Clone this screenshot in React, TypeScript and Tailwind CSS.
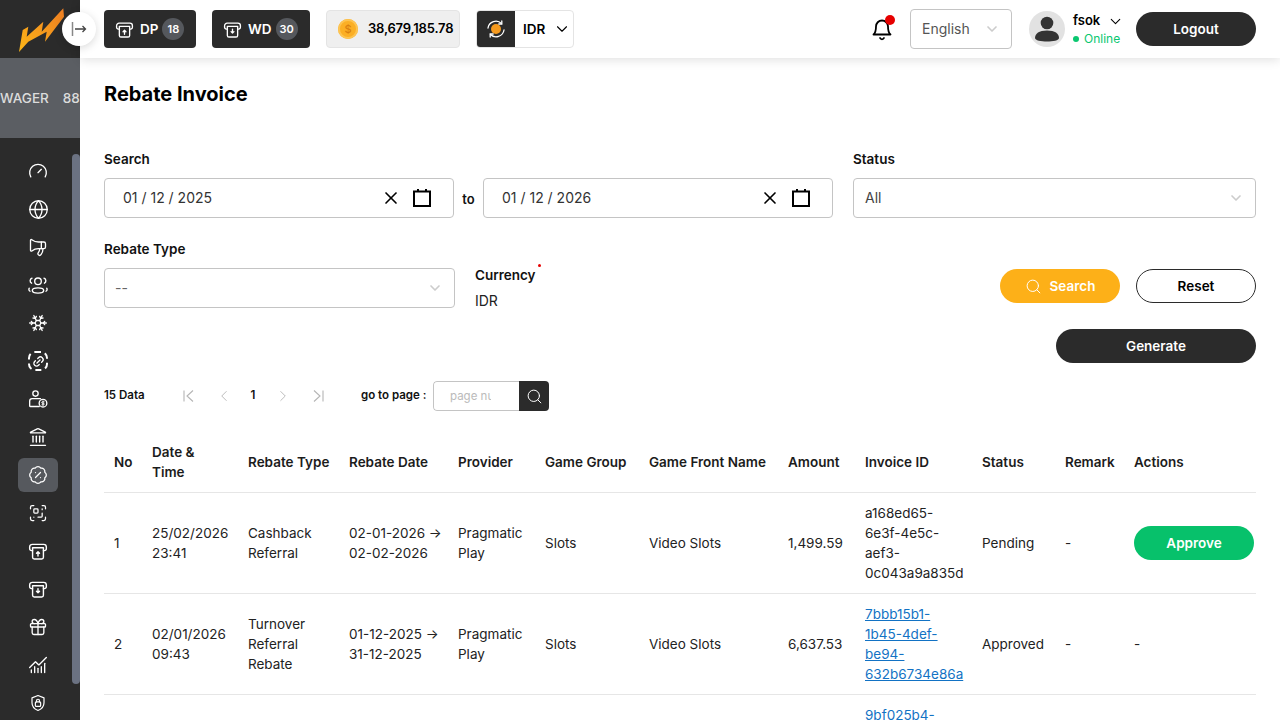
import React from "react";
import { ChevronDown, ChevronLeft, ChevronRight, ChevronsLeft, Search, X, Gauge, Globe, Megaphone, BadgePercent, Gift, Landmark, ScanQrCode, ChartNoAxesCombined, Snowflake, Link2 } from "lucide-react";

function Atm({ down = false, size = 20 }: { down?: boolean; size?: number }) {
  return (
    <svg width={size} height={size} viewBox="0 0 24 24" fill="none" stroke="currentColor" strokeWidth="1.7" strokeLinecap="round" strokeLinejoin="round">
      <path d="M5.5 11.5H4.2A2.2 2.2 0 0 1 2 9.3V7.2A3.2 3.2 0 0 1 5.2 4h13.6A3.2 3.2 0 0 1 22 7.2v2.1a2.2 2.2 0 0 1-2.2 2.2h-1.3" />
      <path d="M5.5 8h13v11.5a2 2 0 0 1-2 2h-9a2 2 0 0 1-2-2Z" />
      {down ? <path d="M12 11.5v5m-1.8-1.8L12 16.5l1.8-1.8" /> : <path d="M12 18v-5m-1.8 1.8L12 13l1.8 1.8" />}
    </svg>
  );
}

function UsersRing() {
  return (
    <svg width="22" height="22" viewBox="0 0 24 24" fill="none" stroke="currentColor" strokeWidth="1.5" strokeLinecap="round">
      <circle cx="12" cy="8" r="3.6" />
      <ellipse cx="12" cy="18" rx="6.2" ry="2.8" />
      <path d="M5.5 4.5A3 3 0 0 0 5 10M18.5 4.5A3 3 0 0 1 19 10M2.5 15.5c-.8 1.2-.5 2.5.8 3.3M21.5 15.5c.8 1.2.5 2.5-.8 3.3" />
    </svg>
  );
}

function UserDollar() {
  return (
    <svg width="20" height="20" viewBox="0 0 24 24" fill="none" stroke="currentColor" strokeWidth="1.6" strokeLinecap="round">
      <circle cx="9" cy="5.5" r="3.2" />
      <path d="M15 11.5H5a3 3 0 0 0-3 3V20a1 1 0 0 0 1 1h10.5" />
      <circle cx="18" cy="17" r="4.6" />
      <path d="M19.3 15.4h-1.9a.9.9 0 0 0 0 1.8h1.2a.9.9 0 0 1 0 1.8h-1.9M18 14.4v5.2" strokeWidth="1.1" />
    </svg>
  );
}

function LinkRound() {
  return (
    <span className="relative flex h-5 w-5 items-center justify-center rounded-[7px] border-2 border-dashed border-white">
      <Link2 size={13} strokeWidth={2.4} className="-rotate-45" />
    </span>
  );
}

function ShieldLock() {
  return (
    <svg width="18" height="18" viewBox="0 0 24 24" fill="none" stroke="currentColor" strokeWidth="1.6" strokeLinecap="round" strokeLinejoin="round">
      <path d="M12 2l8 3.2v6.3c0 4.8-3.2 8.4-8 10.5-4.800-2.100-8-5.700-8-10.500V5.200Z" />
      <rect x="8.500" y="10.500" width="7" height="6" rx="1.200" />
      <path d="M10 10.500V9a2 2 0 0 1 4 0v1.500" />
    </svg>
  );
}

const navItems: React.ReactNode[] = [
  <Gauge size={20} strokeWidth={1.6} />,
  <Globe size={21} strokeWidth={1.5} />,
  <Megaphone size={20} strokeWidth={1.6} className="-scale-x-100" />,
  <UsersRing />,
  <Snowflake size={20} strokeWidth={1.6} />,
  <LinkRound />,
  <UserDollar />,
  <Landmark size={20} strokeWidth={1.7} />,
  <BadgePercent size={20} strokeWidth={1.5} />,
  <ScanQrCode size={20} strokeWidth={1.5} />,
  <Atm />,
  <Atm down />,
  <Gift size={20} strokeWidth={1.6} />,
  <ChartNoAxesCombined size={20} strokeWidth={1.6} />,
  <ShieldLock />,
];

function Logo() {
  return (
    <svg width="80" height="58" viewBox="0 0 80 58">
      <defs>
        <linearGradient id="bolt" x1="0" y1="1" x2="1" y2="0">
          <stop offset="0" stopColor="#fdb717" />
          <stop offset="1" stopColor="#ee7d22" />
        </linearGradient>
      </defs>
      <polygon fill="url(#bolt)" points="19,52 22.700,30 28.300,26.700 26.700,36.700 43.300,21.700 41.700,31.700 63.300,8.300 64,16.700 45,41.700 46.700,31.700 28.300,41.700" />
    </svg>
  );
}

function DateBox({ value }: { value: string }) {
  return (
    <div className="flex h-10 w-[350px] items-center rounded border border-[#c4c4c4] bg-white pl-[18px] pr-[22px] text-sm text-[#333]">
      <span className="flex-1 whitespace-pre">{value}</span>
      <X size={20} strokeWidth={2} className="mr-[12px] text-black" />
      <svg width="18" height="18" viewBox="0 0 18 18" fill="none" stroke="black" strokeWidth="2">
        <rect x="1" y="2.500" width="16" height="14.500" />
        <path d="M5 0v3M13 0v3" />
      </svg>
    </div>
  );
}

const thCls = "px-[10px] text-left align-middle text-[13.500px] font-semibold text-[#1c1c1c] whitespace-nowrap";
const tdCls = "px-[10px] align-middle text-[13.500px] leading-5 text-[#222] whitespace-nowrap";

const rows = [
  { no: "1", date: ["25/02/2026", "23:41"], type: ["Cashback", "Referral"], range: ["02-01-2026 →", "02-02-2026"], amount: "1,499.59", id: ["a168ed65-", "6e3f-4e5c-", "aef3-", "0c043a9a835d"], link: false, status: "Pending", action: true },
  { no: "2", date: ["02/01/2026", "09:43"], type: ["Turnover", "Referral", "Rebate"], range: ["01-12-2025 →", "31-12-2025"], amount: "6,637.53", id: ["7bbb15b1-", "1b45-4def-", "be94-", "632b6734e86a"], link: true, status: "Approved", action: false },
];

function Lines({ items }: { items: string[] }) {
  return (
    <>
      {items.map((t) => (
        <div key={t}>{t}</div>
      ))}
    </>
  );
}

export default function App() {
  return (
    <div className="relative flex h-[720px] w-[1280px] overflow-hidden bg-white font-['Inter',sans-serif] text-[#111]">
      <aside className="relative flex w-20 shrink-0 flex-col bg-[#2b2b2b] text-white">
        <div className="h-[58px] shrink-0"><Logo /></div>
        <div className="flex h-20 shrink-0 items-center gap-[14px] overflow-hidden whitespace-nowrap bg-[#5b5e63] text-[13.500px] font-medium text-[#dcdcdc]">
          <span>WAGER</span>
          <span>888</span>
        </div>
        <nav className="mt-[14px] flex flex-col items-center pr-1">
          {navItems.map((icon, i) => (
            <div key={i} className="flex h-[38px] w-full shrink-0 items-center justify-center">
              <div className={"flex h-[34px] w-10 items-center justify-center rounded-md " + (i === 8 ? "bg-[#56595e]" : "")}>{icon}</div>
            </div>
          ))}
        </nav>
        <div className="absolute left-[72px] top-[154px] h-[530px] w-2 rounded-full bg-[#6b7282]" />
      </aside>

      <div className="absolute left-[62px] top-3 z-20 flex h-[34px] w-[34px] items-center justify-center rounded-full bg-white shadow-[0_2px_8px_rgba(0,0,0,0.15)]">
        <svg width="16" height="16" viewBox="0 0 16 16" fill="none" strokeWidth="1.300">
          <path d="M1.500 1v14" stroke="#888" strokeWidth="1.500" />
          <path d="M4 8h10.500M11.500 5l3 3-3 3" stroke="#444" />
        </svg>
      </div>

      <div className="flex min-w-0 flex-1 flex-col">
        <header className="z-10 flex h-[58px] shrink-0 items-center bg-white pl-6 pr-6 shadow-[0_2px_10px_rgba(0,0,0,0.12)]">
          <div className="flex h-[38px] w-[92px] items-center rounded bg-[#2b2b2b] pl-[11px] text-[13.500px] font-semibold text-white">
            <Atm size={19} />
            <span className="ml-[6px]">DP</span>
            <span className="ml-1 flex h-[22px] w-[22px] items-center justify-center rounded-full bg-[#55585d] text-[11px]">18</span>
          </div>
          <div className="ml-4 flex h-[38px] w-[98px] items-center rounded bg-[#2b2b2b] pl-[11px] text-[13.500px] font-semibold text-white">
            <Atm down size={19} />
            <span className="ml-[6px]">WD</span>
            <span className="ml-1 flex h-[22px] w-[22px] items-center justify-center rounded-full bg-[#55585d] text-[11px]">30</span>
          </div>
          <div className="ml-4 flex h-[38px] w-[134px] items-center rounded border border-[#e4e4e4] bg-[#efefef] pl-[11px] text-[13px] font-semibold text-black">
            <span className="flex h-5 w-5 items-center justify-center rounded-full bg-[#fbaf25] text-[11px] font-medium text-[#d97f10] shadow-[inset_0_0_0_2px_#fdc452]">$</span>
            <span className="ml-[10px] tracking-[-0.2px]">38,679,185.78</span>
          </div>
          <div className="ml-4 flex h-[38px] w-[98px] items-center overflow-hidden rounded border border-[#e4e4e4] bg-white">
            <div className="flex h-full w-[38px] items-center justify-center bg-[#2b2b2b]">
              <svg width="20" height="20" viewBox="0 0 20 20" fill="none" stroke="white" strokeWidth="1.300" strokeLinecap="round">
                <circle cx="10" cy="10" r="5" fill="#f59a1f" stroke="none" />
                <path d="M2 9a8 8 0 0 1 13.500-4.500M18 11a8 8 0 0 1-13.500 4.500" />
                <path d="M15.800 2v3h-3M4.200 18v-3h3" />
              </svg>
            </div>
            <span className="ml-[8px] text-[13.500px] font-semibold text-black">IDR</span>
            <ChevronDown size={18} strokeWidth={1.5} className="ml-[8px] text-black" />
          </div>

          <div className="relative ml-auto mr-[16px]">
            <svg width="24" height="24" viewBox="0 0 24 24" fill="none" stroke="black" strokeWidth="1.800" strokeLinecap="round" strokeLinejoin="round">
              <path d="M6 9.500a6 6 0 0 1 12 0c0 6 2.500 8 2.500 8h-17S6 15.500 6 9.500Z" />
              <path d="M10 21a2.200 2.200 0 0 0 4 0" />
            </svg>
            <span className="absolute -right-[1px] -top-[2px] h-[10px] w-[10px] rounded-full bg-[#e60000]" />
          </div>
          <div className="flex h-10 w-[102px] items-center rounded border border-[#c4c4c4] pl-[11px] pr-[11px] text-sm text-[#555]">
            <span className="flex-1">English</span>
            <ChevronDown size={16} strokeWidth={2.5} className="text-[#ccc]" />
          </div>
          <div className="ml-[17px] flex h-9 w-9 items-center justify-center rounded-full bg-[#e2e2e2]">
            <svg width="26" height="28" viewBox="0 0 26 28" fill="#333">
              <circle cx="13" cy="8" r="6.300" />
              <path d="M1 23c0-4.500 4-7.500 12-7.500s12 3 12 7.500c0 2.500-6 3.500-12 3.500S1 25.500 1 23Z" />
            </svg>
          </div>
          <div className="ml-2 w-[63px]">
            <div className="flex h-[20px] items-center text-[13px] font-semibold text-black">
              <span>fsok</span>
              <ChevronDown size={17} strokeWidth={1.5} className="ml-[7px]" />
            </div>
            <div className="flex h-[16px] items-center text-xs text-[#0ac770]">
              <span className="mr-[5px] h-[6px] w-[6px] rounded-full bg-[#0ac770]" />
              Online
            </div>
          </div>
          <div className="flex h-[34px] w-[120px] items-center justify-center rounded-full bg-[#2b2b2b] text-[13.500px] font-semibold text-white">Logout</div>
        </header>

        <main className="min-h-0 flex-1 overflow-hidden px-6">
          <h1 className="mt-[22px] h-7 text-xl font-bold leading-7 text-black">Rebate Invoice</h1>

          <div className="mt-[41px] flex">
            <div>
              <div className="h-5 text-[13.500px] font-semibold leading-5 text-[#111]">Search</div>
              <div className="mt-[9px] flex items-center">
                <DateBox value="01 / 12 / 2025" />
                <span className="w-[29px] pt-[3px] text-center text-[13px] font-semibold">to</span>
                <DateBox value="01 / 12 / 2026" />
              </div>
            </div>
            <div className="ml-5 flex-1">
              <div className="h-5 text-[13.500px] font-semibold leading-5 text-[#111]">Status</div>
              <div className="mt-[9px] flex h-10 items-center rounded border border-[#c4c4c4] pl-[11px] pr-[11px] text-sm text-[#444]">
                <span className="flex-1">All</span>
                <ChevronDown size={16} strokeWidth={2.5} className="text-[#ccc]" />
              </div>
            </div>
          </div>

          <div className="mt-[21px] flex">
            <div className="w-[351px]">
              <div className="h-5 text-[13.500px] font-semibold leading-5 text-[#111]">Rebate Type</div>
              <div className="mt-[9px] flex h-10 items-center rounded border border-[#c4c4c4] pl-[10px] pr-[11px] text-sm text-[#666]">
                <span className="flex-1">--</span>
                <ChevronDown size={16} strokeWidth={2.5} className="text-[#ccc]" />
              </div>
            </div>
            <div className="ml-5 pt-[26px]">
              <div className="relative h-5 text-[13.500px] font-semibold leading-5 text-[#111]">
                Currency
                <span className="absolute -right-[5px] -top-[1px] h-[3px] w-[3px] rounded-full bg-[#e60000]" />
              </div>
              <div className="mt-[6px] h-5 text-sm leading-5 text-[#222]">IDR</div>
            </div>
            <div className="ml-auto flex gap-4 pt-[30px]">
              <div className="flex h-[34px] w-[120px] items-center justify-center rounded-full bg-[#fdb018] text-[13.500px] font-semibold text-white">
                <Search size={17} strokeWidth={1.4} className="mr-2" />
                Search
              </div>
              <div className="flex h-[34px] w-[120px] items-center justify-center rounded-full border border-[#2b2b2b] bg-white text-[13.500px] font-semibold text-black">Reset</div>
            </div>
          </div>

          <div className="mt-[18px] flex justify-end">
            <div className="flex h-[34px] w-[200px] items-center justify-center rounded-full bg-[#2b2b2b] text-[13.500px] font-semibold text-white">Generate</div>
          </div>

          <div className="mt-[18px] flex h-[30px] items-center text-[11.500px] font-semibold text-[#111]">
            <span className="w-[78px]">15 Data</span>
            <ChevronsLeft size={0} className="hidden" />
            <svg width="14" height="14" viewBox="0 0 14 14" fill="none" stroke="#b5b5b5" strokeWidth="1.100" className="ml-[0px]">
              <path d="M2 1.500v11M11 1.500 5 7l6 5.500" />
            </svg>
            <ChevronLeft size={18} strokeWidth={1.2} className="ml-[19px] text-[#b5b5b5]" />
            <span className="ml-[16px] w-[8px] text-center">1</span>
            <ChevronRight size={18} strokeWidth={1.2} className="ml-[17px] text-[#b5b5b5]" />
            <svg width="14" height="14" viewBox="0 0 14 14" fill="none" stroke="#b5b5b5" strokeWidth="1.100" className="ml-[19px]">
              <path d="M12 1.500v11M3 1.500 9 7l-6 5.500" />
            </svg>
            <span className="ml-[36px] w-[72px]">go to page :</span>
            <div className="flex h-[30px] w-[116px] overflow-hidden rounded">
              <input placeholder="page number" className="h-full w-[86px] rounded-l border border-r-0 border-[#c4c4c4] pl-4 pr-7 text-[11.500px] font-normal outline-none placeholder:text-[#bbb]" />
              <div className="flex h-full w-[30px] items-center justify-center bg-[#2b2b2b] text-white">
                <Search size={17} strokeWidth={1.4} />
              </div>
            </div>
          </div>

          <table className="mt-[22px] w-[1152px] table-fixed border-collapse">
            <colgroup>
              <col className="w-[38px]" />
              <col className="w-[96px]" />
              <col className="w-[101px]" />
              <col className="w-[109px]" />
              <col className="w-[87px]" />
              <col className="w-[104px]" />
              <col className="w-[139px]" />
              <col className="w-[77px]" />
              <col className="w-[117px]" />
              <col className="w-[83px]" />
              <col className="w-[69px]" />
              <col className="w-[132px]" />
            </colgroup>
            <thead>
              <tr className="h-[59px] border-b border-[#e6e6e6]">
                <th className={thCls}>No</th>
                <th className={thCls + " leading-5"}>Date &amp;<br />Time</th>
                <th className={thCls}>Rebate Type</th>
                <th className={thCls}>Rebate Date</th>
                <th className={thCls}>Provider</th>
                <th className={thCls}>Game Group</th>
                <th className={thCls}>Game Front Name</th>
                <th className={thCls}>Amount</th>
                <th className={thCls}>Invoice ID</th>
                <th className={thCls}>Status</th>
                <th className={thCls}>Remark</th>
                <th className={thCls}>Actions</th>
              </tr>
            </thead>
            <tbody>
              {rows.map((r) => (
                <tr key={r.no} className="h-[101px] border-b border-[#e6e6e6]">
                  <td className={tdCls}>{r.no}</td>
                  <td className={tdCls}><Lines items={r.date} /></td>
                  <td className={tdCls}><Lines items={r.type} /></td>
                  <td className={tdCls}><Lines items={r.range} /></td>
                  <td className={tdCls}>Pragmatic<br />Play</td>
                  <td className={tdCls}>Slots</td>
                  <td className={tdCls}>Video Slots</td>
                  <td className={tdCls}>{r.amount}</td>
                  <td className={tdCls}>
                    {r.link ? (
                      <a href="#" className="text-[#1272c4] underline"><Lines items={r.id} /></a>
                    ) : (
                      <Lines items={r.id} />
                    )}
                  </td>
                  <td className={tdCls}>{r.status}</td>
                  <td className={tdCls}>-</td>
                  <td className={tdCls}>
                    {r.action ? (
                      <div className="flex h-[34px] w-[120px] items-center justify-center rounded-full bg-[#07c16b] text-[13.500px] font-semibold text-white">Approve</div>
                    ) : (
                      "-"
                    )}
                  </td>
                </tr>
              ))}
              <tr className="h-[101px]">
                <td colSpan={8} />
                <td className={tdCls + " !align-top pt-[10px]"}>
                  <a href="#" className="text-[#1272c4] underline">9bf025b4-</a>
                </td>
                <td colSpan={3} />
              </tr>
            </tbody>
          </table>
        </main>
      </div>
    </div>
  );
}
